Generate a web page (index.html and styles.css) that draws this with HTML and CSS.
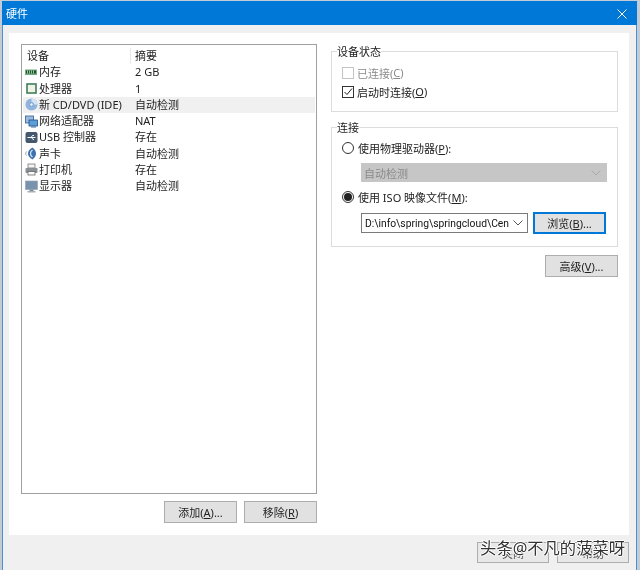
FILE: index.html
```html
<!DOCTYPE html>
<html lang="zh-CN">
<head>
<meta charset="utf-8">
<title>硬件</title>
<link rel="stylesheet" href="styles.css">
</head>
<body>
<div class="window">
  <header class="titlebar">
    <span class="title">硬件</span>
    <svg class="close" width="10" height="10" viewBox="0 0 10 10"><path d="M.5.5l9 9M9.5.5l-9 9" stroke="#fff" stroke-width="1" fill="none"/></svg>
  </header>
  <div class="body">
    <main class="panel">
      <section class="left">
        <div class="list">
          <div class="row head"><span class="c1">设备</span><span class="c2">摘要</span></div>
          <div class="row"><span class="c1"><svg class="ico" viewBox="0 0 13 13"><rect x="0" y="3.500" width="12" height="5.500" fill="#6fae7c"/><rect x="1" y="4.500" width="10" height="3" fill="#1f4f2c"/><path d="M2.500 4.500v3M4.500 4.500v3M6.500 4.500v3M8.500 4.500v3" stroke="#bfe0c0" stroke-width=".8"/></svg>内存</span><span class="c2">2 GB</span></div>
          <div class="row"><span class="c1"><svg class="ico" viewBox="0 0 13 13"><rect x="2" y="2" width="9" height="9" fill="#eef3e6" stroke="#3f7f5a" stroke-width="1.600"/></svg>处理器</span><span class="c2">1</span></div>
          <div class="row sel"><span class="c1"><svg class="ico" viewBox="0 0 13 13"><circle cx="6.500" cy="6.500" r="6" fill="#8fb4de"/><path d="M6.500.5a6 6 0 0 1 6 6H9a2.500 2.500 0 0 0-2.500-2.500z" fill="#d4e4f5"/><circle cx="6.500" cy="6.500" r="1.700" fill="#f2f6fb" stroke="#5f86b5" stroke-width=".6"/></svg>新 CD/DVD (IDE)</span><span class="c2">自动检测</span></div>
          <div class="row"><span class="c1"><svg class="ico" viewBox="0 0 13 13"><rect x=".5" y="1" width="8" height="7" fill="#9dbde0" stroke="#2f5f96" stroke-width=".8"/><rect x="4" y="5" width="8.500" height="6" fill="#5f9fd8" stroke="#1f4f86" stroke-width=".8"/><path d="M6 12h5" stroke="#3a6a9a" stroke-width="1"/></svg>网络适配器</span><span class="c2">NAT</span></div>
          <div class="row"><span class="c1"><svg class="ico" viewBox="0 0 13 13"><rect x=".5" y="1" width="12" height="11" rx="2" fill="#44586e"/><path d="M2.500 6.500h8M6 6.500l1.500-2h1.500M6.500 6.500l1.500 2h1" stroke="#fff" stroke-width="1" fill="none"/></svg>USB 控制器</span><span class="c2">存在</span></div>
          <div class="row"><span class="c1"><svg class="ico" viewBox="0 0 13 13"><path d="M7.500.5C4 2.500 3 4.500 3 6.500s1 4 4.500 6c2.500-2 3.500-4 3.500-6s-1-4-3.500-6z" fill="#3f72ad"/><path d="M7.500 3c-1.500 1-2 2.300-2 3.500s.5 2.500 2 3.500" stroke="#d6e4f3" stroke-width="1.300" fill="none"/><path d="M1.500 4.500c-1 1.300-1 2.700 0 4" stroke="#7fa0c6" fill="none"/></svg>声卡</span><span class="c2">自动检测</span></div>
          <div class="row"><span class="c1"><svg class="ico" viewBox="0 0 13 13"><rect x="3" y="1" width="7" height="4" fill="#f4f4f4" stroke="#777" stroke-width=".8"/><rect x=".5" y="5" width="12" height="5" rx="1" fill="#8b8f96"/><rect x="3" y="8.500" width="7" height="3.500" fill="#fafafa" stroke="#666" stroke-width=".8"/></svg>打印机</span><span class="c2">存在</span></div>
          <div class="row"><span class="c1"><svg class="ico" viewBox="0 0 13 13"><rect x=".5" y="1" width="12" height="8.500" fill="#7a93ad" stroke="#8ea0b4" stroke-width=".6"/><rect x="4.500" y="9.500" width="4" height="1.500" fill="#7f8b98"/><rect x="2.500" y="11" width="8" height="1.500" fill="#a5afba"/></svg>显示器</span><span class="c2">自动检测</span></div>
        </div>
        <div class="actions">
          <div class="btn">添加(<u>A</u>)...</div>
          <div class="btn">移除(<u>R</u>)</div>
        </div>
      </section>
      <section class="right">
        <fieldset class="group status">
          <legend>设备状态</legend>
          <label class="opt off"><span class="check off-box"></span>已连接(<u>C</u>)</label>
          <label class="opt"><span class="check"><svg width="10" height="10" viewBox="0 0 10 10"><path d="M1.500 5l2.500 2.500 5-6" stroke="#222" stroke-width="1" fill="none"/></svg></span>启动时连接(<u>O</u>)</label>
        </fieldset>
        <fieldset class="group conn">
          <legend>连接</legend>
          <label class="opt"><span class="radio"></span>使用物理驱动器(<u>P</u>):</label>
          <div class="select disabled"><span>自动检测</span><svg width="10" height="6" viewBox="0 0 10 6"><path d="M.5.500l4.500 4.500 4.500-4.500" stroke="#aaa" fill="none"/></svg></div>
          <label class="opt"><span class="radio on"></span>使用 ISO 映像文件(<u>M</u>):</label>
          <div class="iso">
            <div class="select combo"><span class="path">D:\info\spring\springcloud\Cen</span><svg width="10" height="6" viewBox="0 0 10 6"><path d="M.5.500l4.500 4.500 4.500-4.500" stroke="#555" fill="none"/></svg></div>
            <div class="btn focus">浏览(<u>B</u>)...</div>
          </div>
        </fieldset>
        <div class="adv"><div class="btn">高级(<u>V</u>)...</div></div>
      </section>
    </main>
    <footer class="footer">
      <div class="btn">关闭</div>
      <div class="btn">帮助</div>
      <div class="watermark">头条@不凡的菠菜呀</div>
    </footer>
  </div>
</div>
</body>
</html>
```

FILE: styles.css
```css
* { box-sizing: border-box; }
html, body { margin: 0; height: 100%; }
body {
  background: #c3ccd6;
  font-family: "Noto Sans", "Noto Sans CJK SC", sans-serif;
  font-size: 11px;
  color: #222;
  overflow: hidden;
}
.window {
  margin: 1px 3px 0 2px;
  width: 635px;
  height: 569px;
  border-left: 1px solid #4d8fd0;
  border-right: 1px solid #4d8fd0;
  display: flex;
  flex-direction: column;
  background: #f0f0f0;
  filter: blur(.3px);
}
.titlebar {
  height: 24px;
  margin: 0 -1px;
  background: #0078d7;
  color: #fff;
  display: flex;
  align-items: center;
  justify-content: space-between;
  padding: 0 10px 0 4px;
  font-size: 11px;
}
.close { margin-top: 1px; }
.body { flex: 1; display: flex; flex-direction: column; padding: 8px 7px 0 6px; position: relative; }
.panel {
  height: 502px;
  background: #fff;
  display: flex;
  gap: 14px;
  padding: 11px 11px 12px 12px;
}
.left { width: 296px; display: flex; flex-direction: column; gap: 7px; }
.list { height: 450px; border: 1px solid #a0a0a0; padding: 3px 1px; background: #fff; }
.row { height: 16.25px; display: flex; align-items: center; line-height: 16px; white-space: nowrap; }
.row.sel { background: #f0f0f0; }
.c1 { width: 112px; display: flex; align-items: center; padding-left: 2px; white-space: pre; }
.head .c1 { padding-left: 4px; border-right: 1px solid #e8e8e8; width: 108px; margin-right: 4px; }
.ico { width: 13px; height: 13px; margin-right: 1px; flex: none; }
.actions { display: flex; justify-content: flex-end; gap: 7px; }
.btn {
  width: 73px;
  height: 22px;
  border: 1px solid #adadad;
  background: #e1e1e1;
  display: flex;
  align-items: center;
  justify-content: center;
  white-space: pre;
}
.right { width: 287px; display: flex; flex-direction: column; }
.group { margin: 0; border: 1px solid #dcdcdc; min-inline-size: 0; }
.group legend { padding: 1px 0 0; margin-left: -5px; line-height: 14px; font-size: 11px; }
.status { height: 68px; padding: 4px 10px 0; margin-bottom: 8px; display: flex; flex-direction: column; }
.conn { height: 127px; padding: 1px 10px 0; margin-bottom: 8px; }
.opt { display: flex; align-items: center; height: 19px; white-space: pre; }
.opt.off { color: #8a8a8a; }
.check { width: 12px; height: 12px; border: 1px solid #333; background: #fff; margin-right: 3px; display: flex; align-items: center; justify-content: center; flex: none; }
.off-box { border-color: #c4c4c4; }
.radio { width: 12px; height: 12px; border: 1px solid #333; border-radius: 50%; margin-right: 4px; background: #fff; flex: none; display: flex; align-items: center; justify-content: center; }
.radio.on::after { content: ""; width: 8px; height: 8px; border-radius: 50%; background: #222; }
.select { display: flex; align-items: center; justify-content: space-between; white-space: nowrap; }
.disabled { width: 246px; height: 19px; margin: 3px 0 3px 19px; background: #c6c6c6; color: #8a8a8a; padding: 0 6px 0 3px; }
.conn .opt { height: 24px; }
.iso { display: flex; align-items: center; justify-content: space-between; margin: 3px 1px 0 19px; }
.combo { width: 167px; height: 20px; background: #fff; border: 1px solid #7a7a7a; padding: 0 4px 0 3px; color: #111; }
.path { font-family: "Roboto", "Noto Sans", sans-serif; font-size: 10.3px; }
.focus { border: 2px solid #0078d7; }
.adv { display: flex; justify-content: flex-end; }
.footer {
  flex: 1;
  display: flex;
  justify-content: flex-end;
  gap: 8px;
  padding-top: 7px;
  position: relative;
}
.footer .btn { height: 21px; width: 72px; background: #e8e8e8; color: #555; }
.watermark {
  position: absolute;
  right: 4px;
  top: 2px;
  font-size: 16.3px;
  line-height: 22px;
  color: #333;
  text-shadow: 1px 0 #fff, -1px 0 #fff, 0 1px #fff, 0 -1px #fff;
  white-space: nowrap;
}
```
